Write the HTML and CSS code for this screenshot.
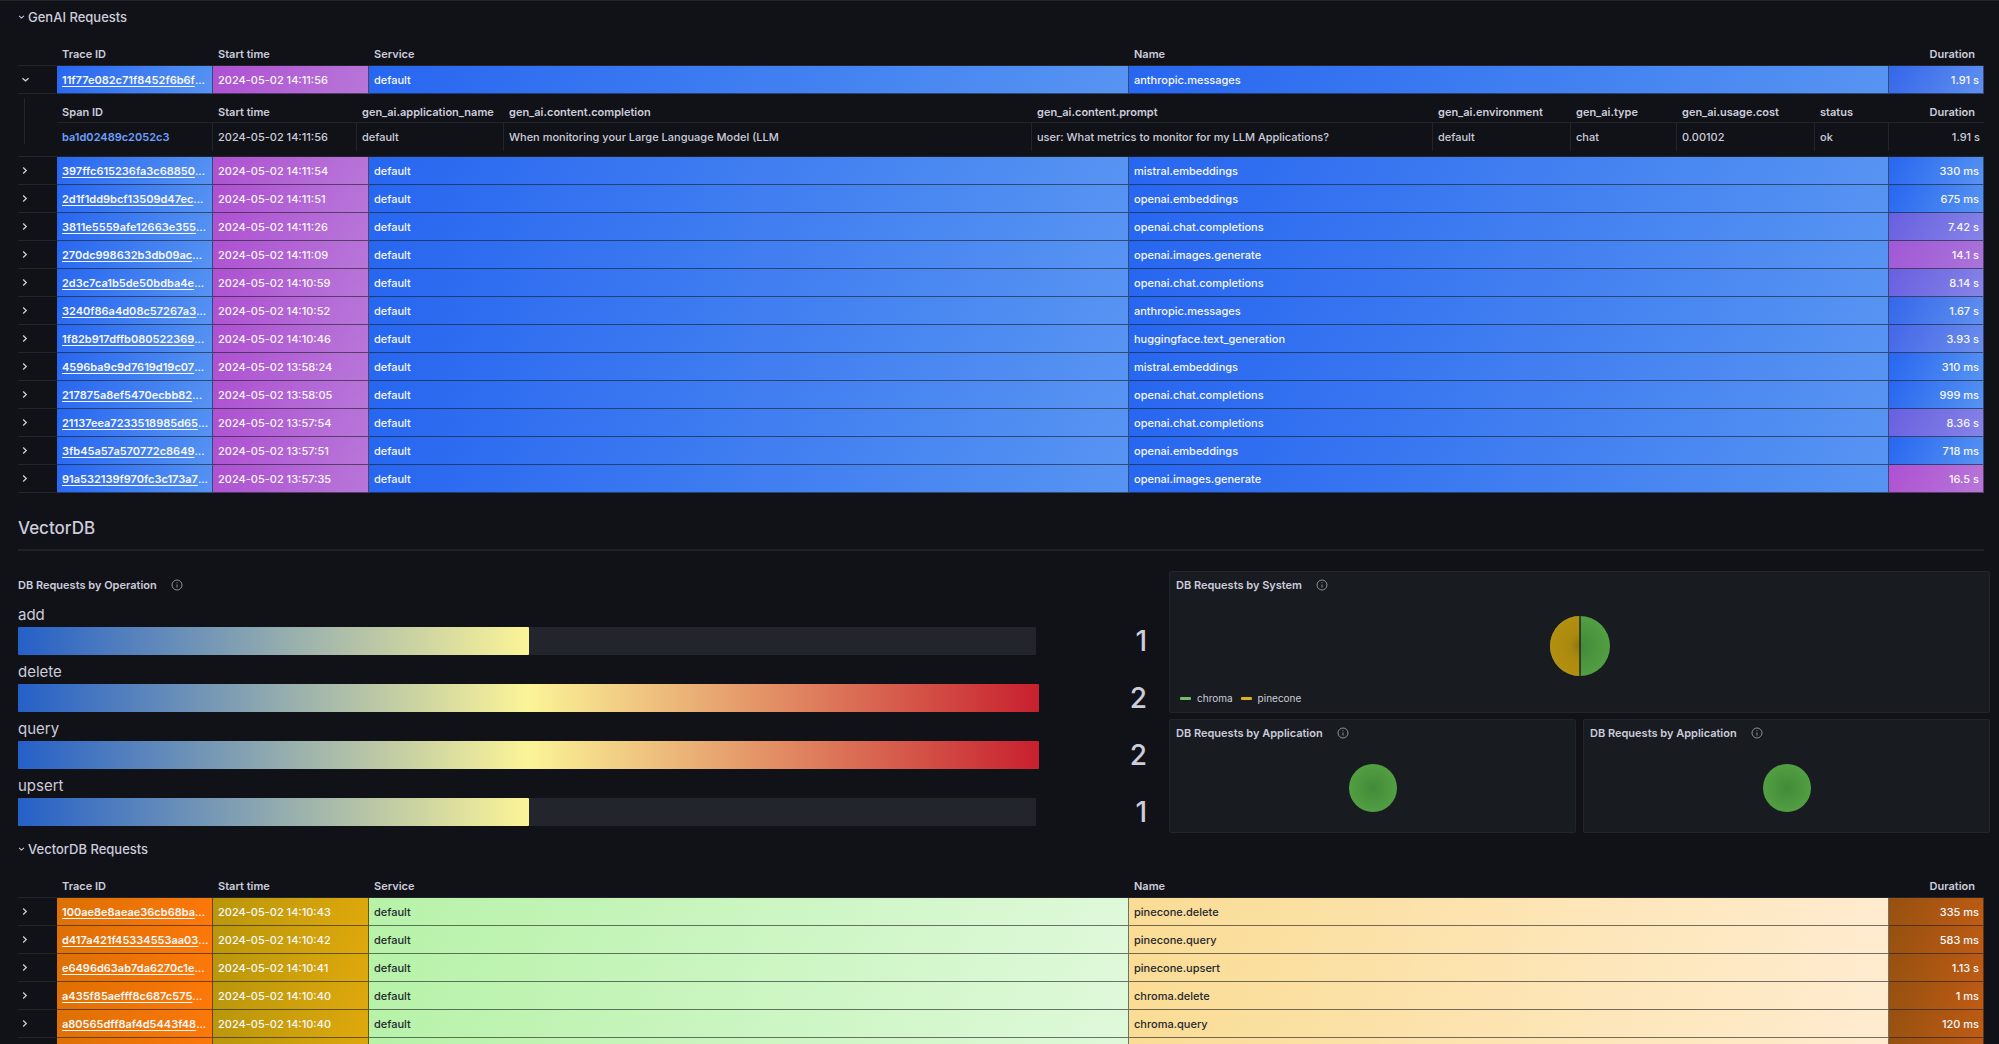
FILE: index.html
```html
<!DOCTYPE html>
<html lang="en">
<head>
<meta charset="utf-8">
<title>LLM dashboard</title>
<link rel="stylesheet" href="styles.css">
</head>
<body>
<svg class="defs" aria-hidden="true">
  <symbol id="right" viewBox="0 0 8 10"><path d="M2.5 1.5 6 5 2.5 8.500"/></symbol>
  <symbol id="down" viewBox="0 0 10 8"><path d="M1.500 2.500 5 5.500 8.500 2.500"/></symbol>
  <symbol id="info" viewBox="0 0 12 12"><circle cx="6" cy="6" r="5"/><path d="M6 5.500V8.500M6 3.300V4.200"/></symbol>
  <radialGradient id="green"><stop offset="0" stop-color="#438a38"/><stop offset="1" stop-color="#529f43"/></radialGradient>
  <radialGradient id="gold" gradientUnits="userSpaceOnUse" cx="31" cy="30" r="30"><stop offset="0" stop-color="#8f7414"/><stop offset=".4" stop-color="#a98a0e"/><stop offset="1" stop-color="#b48f10"/></radialGradient>
</svg>
<main class="dashboard">
  <section>
    <h2 class="row-title"><button type="button"><svg><use href="#down"/></svg>GenAI Requests</button></h2>
    <table class="traces ai">
      <colgroup><col class="c-toggle"><col class="c-id"><col class="c-id"><col><col><col class="c-duration"></colgroup>
      <thead><tr><td></td><th>Trace ID</th><th>Start time</th><th>Service</th><th>Name</th><th>Duration</th></tr></thead>
      <tbody>
        <tr><td><button type="button" aria-label="Collapse"><svg class="wide"><use href="#down"/></svg></button></td><td><a href="#">11f77e082c71f8452f6b6f</a>...</td><td>2024-05-02 14:11:56</td><td>default</td><td>anthropic.messages</td><td class="d1">1.91 s</td></tr>
        <tr class="expanded"><td><div class="guide"></div></td><td colspan="5">
          <table class="spans">
            <colgroup><col class="c-id"><col class="c-start"><col class="c-app"><col class="c-completion"><col><col class="c-env"><col class="c-type"><col class="c-env"><col class="c-status"><col class="c-duration"></colgroup>
            <thead><tr><th>Span ID</th><th>Start time</th><th>gen_ai.application_name</th><th>gen_ai.content.completion</th><th>gen_ai.content.prompt</th><th>gen_ai.environment</th><th>gen_ai.type</th><th>gen_ai.usage.cost</th><th>status</th><th>Duration</th></tr></thead>
            <tbody><tr><td><a href="#">ba1d02489c2052c3</a></td><td>2024-05-02 14:11:56</td><td>default</td><td>When monitoring your Large Language Model (LLM</td><td>user: What metrics to monitor for my LLM Applications?</td><td>default</td><td>chat</td><td>0.00102</td><td>ok</td><td>1.91 s</td></tr></tbody>
          </table></td></tr>
        <tr><td><button type="button" aria-label="Expand"><svg><use href="#right"/></svg></button></td><td><a href="#">397ffc615236fa3c68850</a>...</td><td>2024-05-02 14:11:54</td><td>default</td><td>mistral.embeddings</td><td>330 ms</td></tr>
        <tr><td><button type="button" aria-label="Expand"><svg><use href="#right"/></svg></button></td><td><a href="#">2d1f1dd9bcf13509d47ec</a>...</td><td>2024-05-02 14:11:51</td><td>default</td><td>openai.embeddings</td><td>675 ms</td></tr>
        <tr><td><button type="button" aria-label="Expand"><svg><use href="#right"/></svg></button></td><td><a href="#">3811e5559afe12663e355</a>...</td><td>2024-05-02 14:11:26</td><td>default</td><td>openai.chat.completions</td><td class="d3">7.42 s</td></tr>
        <tr><td><button type="button" aria-label="Expand"><svg><use href="#right"/></svg></button></td><td><a href="#">270dc998632b3db09ac</a>...</td><td>2024-05-02 14:11:09</td><td>default</td><td>openai.images.generate</td><td class="d4">14.1 s</td></tr>
        <tr><td><button type="button" aria-label="Expand"><svg><use href="#right"/></svg></button></td><td><a href="#">2d3c7ca1b5de50bdba4e</a>...</td><td>2024-05-02 14:10:59</td><td>default</td><td>openai.chat.completions</td><td class="d3">8.14 s</td></tr>
        <tr><td><button type="button" aria-label="Expand"><svg><use href="#right"/></svg></button></td><td><a href="#">3240f86a4d08c57267a3</a>...</td><td>2024-05-02 14:10:52</td><td>default</td><td>anthropic.messages</td><td class="d1">1.67 s</td></tr>
        <tr><td><button type="button" aria-label="Expand"><svg><use href="#right"/></svg></button></td><td><a href="#">1f82b917dffb080522369</a>...</td><td>2024-05-02 14:10:46</td><td>default</td><td>huggingface.text_generation</td><td class="d2">3.93 s</td></tr>
        <tr><td><button type="button" aria-label="Expand"><svg><use href="#right"/></svg></button></td><td><a href="#">4596ba9c9d7619d19c07</a>...</td><td>2024-05-02 13:58:24</td><td>default</td><td>mistral.embeddings</td><td>310 ms</td></tr>
        <tr><td><button type="button" aria-label="Expand"><svg><use href="#right"/></svg></button></td><td><a href="#">217875a8ef5470ecbb82</a>...</td><td>2024-05-02 13:58:05</td><td>default</td><td>openai.chat.completions</td><td>999 ms</td></tr>
        <tr><td><button type="button" aria-label="Expand"><svg><use href="#right"/></svg></button></td><td><a href="#">21137eea7233518985d65</a>...</td><td>2024-05-02 13:57:54</td><td>default</td><td>openai.chat.completions</td><td class="d3">8.36 s</td></tr>
        <tr><td><button type="button" aria-label="Expand"><svg><use href="#right"/></svg></button></td><td><a href="#">3fb45a57a570772c8649</a>...</td><td>2024-05-02 13:57:51</td><td>default</td><td>openai.embeddings</td><td>718 ms</td></tr>
        <tr><td><button type="button" aria-label="Expand"><svg><use href="#right"/></svg></button></td><td><a href="#">91a532139f970fc3c173a7</a>...</td><td>2024-05-02 13:57:35</td><td>default</td><td>openai.images.generate</td><td class="d5">16.5 s</td></tr>
      </tbody>
    </table>
  </section>

  <h1 class="heading">VectorDB</h1>

  <section class="charts">
    <article class="gauge">
      <header class="panel-title"><h3>DB Requests by Operation</h3><svg><use href="#info"/></svg></header>
      <div class="bars">
        <div class="bar"><span class="bar-label">add</span><div class="track"><div class="fill half"></div></div><span class="value">1</span></div>
        <div class="bar"><span class="bar-label">delete</span><div class="track"><div class="fill"></div></div><span class="value">2</span></div>
        <div class="bar"><span class="bar-label">query</span><div class="track"><div class="fill"></div></div><span class="value">2</span></div>
        <div class="bar"><span class="bar-label">upsert</span><div class="track"><div class="fill half"></div></div><span class="value">1</span></div>
      </div>
    </article>
    <div class="pies">
      <article class="panel system">
        <header class="panel-title"><h3>DB Requests by System</h3><svg><use href="#info"/></svg></header>
        <svg class="pie" viewBox="0 0 60 60"><circle cx="30" cy="30" r="30" fill="url(#green)"/><path d="M30 0A30 30 0 0 0 30 60Z" fill="url(#gold)"/><path d="M30 0V60" stroke="#1c2620" stroke-width="1.500"/></svg>
        <ul class="legend"><li>chroma</li><li class="yellow">pinecone</li></ul>
      </article>
      <article class="panel">
        <header class="panel-title"><h3>DB Requests by Application</h3><svg><use href="#info"/></svg></header>
        <svg class="pie small" viewBox="0 0 60 60"><circle cx="30" cy="30" r="30" fill="url(#green)"/></svg>
      </article>
      <article class="panel">
        <header class="panel-title"><h3>DB Requests by Application</h3><svg><use href="#info"/></svg></header>
        <svg class="pie small" viewBox="0 0 60 60"><circle cx="30" cy="30" r="30" fill="url(#green)"/></svg>
      </article>
    </div>
  </section>

  <section>
    <h2 class="row-title"><button type="button"><svg><use href="#down"/></svg>VectorDB Requests</button></h2>
    <table class="traces vdb">
      <colgroup><col class="c-toggle"><col class="c-id"><col class="c-id"><col><col><col class="c-duration"></colgroup>
      <thead><tr><td></td><th>Trace ID</th><th>Start time</th><th>Service</th><th>Name</th><th>Duration</th></tr></thead>
      <tbody>
        <tr><td><button type="button" aria-label="Expand"><svg><use href="#right"/></svg></button></td><td><a href="#">100ae8e8aeae36cb68ba</a>...</td><td>2024-05-02 14:10:43</td><td>default</td><td>pinecone.delete</td><td>335 ms</td></tr>
        <tr><td><button type="button" aria-label="Expand"><svg><use href="#right"/></svg></button></td><td><a href="#">d417a421f45334553aa03</a>...</td><td>2024-05-02 14:10:42</td><td>default</td><td>pinecone.query</td><td>583 ms</td></tr>
        <tr><td><button type="button" aria-label="Expand"><svg><use href="#right"/></svg></button></td><td><a href="#">e6496d63ab7da6270c1e</a>...</td><td>2024-05-02 14:10:41</td><td>default</td><td>pinecone.upsert</td><td>1.13 s</td></tr>
        <tr><td><button type="button" aria-label="Expand"><svg><use href="#right"/></svg></button></td><td><a href="#">a435f85aefff8c687c575</a>...</td><td>2024-05-02 14:10:40</td><td>default</td><td>chroma.delete</td><td>1 ms</td></tr>
        <tr><td><button type="button" aria-label="Expand"><svg><use href="#right"/></svg></button></td><td><a href="#">a80565dff8af4d5443f48</a>...</td><td>2024-05-02 14:10:40</td><td>default</td><td>chroma.query</td><td>120 ms</td></tr>
        <tr><td></td><td></td><td></td><td></td><td></td><td></td></tr>
      </tbody>
    </table>
  </section>
</main>
</body>
</html>
```
FILE: styles.css
```css
* { box-sizing: border-box; }
body {
  margin: 0;
  height: 100vh;
  overflow: hidden;
  background: #111217;
  color: #ccccdc;
  font: 11px/16px Inter, sans-serif;
}
h1, h2, h3, ul { margin: 0; padding: 0; font-weight: 600; }
button { border: 0; padding: 0; background: none; color: inherit; font: inherit; cursor: pointer; }
svg { fill: none; stroke: currentColor; stroke-width: 1.5; }
.defs { position: absolute; width: 0; height: 0; }

.dashboard { border-top: 1px solid #222429; padding: 0 9px 0 18px; }
.dashboard > section:not(.charts), .heading { margin-right: 6px; }

.row-title { height: 32px; font-size: 13px; line-height: 32px; font-weight: 500; }
.row-title button { display: flex; align-items: center; gap: 3px; height: 32px; }
.row-title svg { width: 7px; height: 6px; }

/* Trace tables */
table { width: 100%; table-layout: fixed; border-collapse: separate; border-spacing: 0; }
.c-toggle { width: 39px; }
.c-id { width: 156px; }
.c-duration { width: 95px; }
.c-start { width: 144px; }
.c-app { width: 147px; }
.c-completion { width: 528px; }
.c-env { width: 138px; }
.c-type { width: 106px; }
.c-status { width: 74px; }
th, td { padding: 0 4px 0 5px; text-align: left; white-space: nowrap; overflow: hidden; }
th { font-weight: 600; }
th:last-child, td:last-child { text-align: right; }
th:last-child { padding-right: 9px; }
.traces > thead th, .traces > thead td { height: 33px; padding-top: 9px; border-bottom: 1px solid #222429; }
.traces > tbody > tr > td {
  height: 28px;
  border: solid rgba(24, 27, 31, .6);
  border-width: 0 1px 1px 0;
  background-origin: border-box;
  font-weight: 500;
}
.traces > tbody > tr > td:first-child { border-right-color: transparent; border-bottom-color: #222429; }
.traces a { color: inherit; font-weight: 600; text-underline-offset: 2px; }
.traces td button { display: flex; align-items: center; width: 16px; height: 20px; }
.traces td svg { width: 7px; height: 9px; }
.traces td svg.wide { width: 9px; height: 7px; }
td:first-child > button { margin-left: -2px; }

.ai > tbody > tr:not(.expanded) > td:nth-child(n+2) { background-image: linear-gradient(120deg, #2766f0, #5794f2); color: #f7f8fa; }
.ai > tbody > tr:not(.expanded) > td:nth-child(3) { background-image: linear-gradient(120deg, #ae50d2, #b877d9); }
.ai > tbody > tr > td.d1.d1 { background-image: linear-gradient(120deg, #3466ea, #6091f0); }
.ai > tbody > tr > td.d2.d2 { background-image: linear-gradient(120deg, #4566e8, #6a8eed); }
.ai > tbody > tr > td.d3.d3 { background-image: linear-gradient(120deg, #685fe0, #8684e8); }
.ai > tbody > tr > td.d4.d4 { background-image: linear-gradient(120deg, #a058d6, #aa74da); }
.ai > tbody > tr > td.d5.d5 { background-image: linear-gradient(120deg, #ae50d2, #b877d9); }

.vdb > tbody > tr > td { color: #f7f8fa; }
.vdb > tbody > tr > td:nth-child(1) { color: #ccccdc; }
.vdb > tbody > tr > td:nth-child(2) { background-image: linear-gradient(120deg, #dc7004, #ff780a); }
.vdb > tbody > tr > td:nth-child(3) { background-image: linear-gradient(120deg, #b8960c, #e0a90c); }
.vdb > tbody > tr > td:nth-child(4) { background-image: linear-gradient(120deg, #b7f2a8, #dff9da); color: #24292e; }
.vdb > tbody > tr > td:nth-child(5) { background-image: linear-gradient(120deg, #fadc94, #ffecd0); color: #24292e; }
.vdb > tbody > tr > td:nth-child(6) { background-image: linear-gradient(120deg, #95500f, #c05c15); }

/* Expanded spans */
.traces > tbody > .expanded > td { height: 63px; padding: 0; vertical-align: top; border-color: #222429; border-right: 0; }
.guide { width: 1px; height: 46px; margin: 4px 0 0 6px; background: #222429; }
.spans th { height: 29px; padding-top: 7px; border-bottom: 1px solid #222429; }
.spans td { height: 28px; border-right: 1px solid #222429; }
.spans td:last-child { border-right: 0; }
.spans a { color: #6e9fff; text-decoration: none; }

.heading { height: 58px; padding-top: 22px; border-bottom: 2px solid #202227; font-size: 17px; line-height: 26px; font-weight: 500; }

/* Charts */
.charts { display: grid; grid-template-columns: 1151fr 821fr; padding-top: 20px; }
.panel-title { display: flex; align-items: center; gap: 14px; height: 26px; }
.panel-title h3 { font-size: 11px; }
.panel-title svg { width: 12px; height: 12px; color: #8e8f9b; stroke-width: 1; }
.gauge { display: flex; flex-direction: column; padding: 1px 22px 0 0; }
.bars { flex: 1; display: flex; flex-direction: column; padding-bottom: 7px; }
.bar { flex: 1; display: grid; grid-template-columns: 1018fr 111fr; grid-template-rows: 1fr 28px; }
.bar-label { grid-column: 1 / 3; align-self: end; font-size: 15px; line-height: 24px; }
.track { background: #22252b; border-radius: 1px; }
.fill { width: calc(100% + 3px); height: 28px; border-radius: 1px; background: linear-gradient(90deg, #2560c8, #fbf497 50%, #c8202e); }
.fill.half { width: calc(50% + 2px); background: linear-gradient(90deg, #2560c8, #fbf497); }
.value { font-size: 28px; line-height: 28px; font-weight: 500; text-align: right; }

.pies { display: grid; grid-template-columns: 1fr 1fr; grid-template-rows: 142px 114px; gap: 6px 7px; }
.panel { display: flex; flex-direction: column; border: 1px solid #22252b; border-radius: 2px; background: #181b1f; padding: 0 6px; }
.system { grid-column: 1 / 3; }
.pie { width: 60px; height: 60px; margin: 18px auto 0; stroke: none; }
.pie.small { width: 48px; height: 48px; }
.legend { display: flex; gap: 8px; margin: 14px 4px 0; list-style: none; font-size: 10px; font-weight: 400; }
.legend li { display: flex; align-items: center; gap: 6px; }
.legend li::before { content: ""; width: 11px; height: 3px; border-radius: 1px; background: #73bf69; }
.legend .yellow::before { background: #e0b020; }
```
